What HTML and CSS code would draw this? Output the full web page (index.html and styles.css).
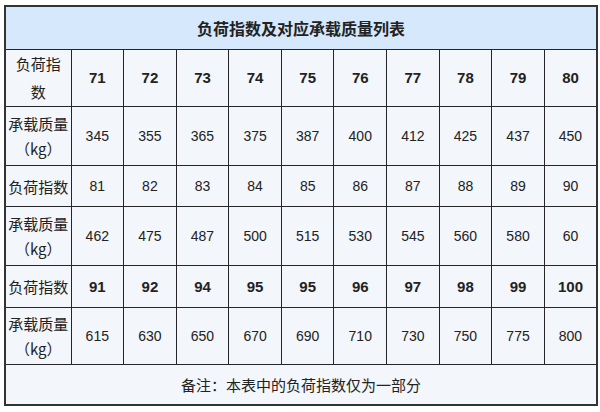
FILE: index.html
```html
<!DOCTYPE html>
<html lang="zh">
<head>
<meta charset="utf-8">
<title>负荷指数及对应承载质量列表</title>
<link rel="stylesheet" href="styles.css">
</head>
<body>
<table class="load-table">
  <colgroup>
    <col class="col-label">
    <col span="10" class="col-val">
  </colgroup>
  <thead>
    <tr class="row-title"><th colspan="11">负荷指数及对应承载质量列表</th></tr>
  </thead>
  <tbody>
    <tr class="row-a bold">
      <td class="label">负荷指<br>数</td>
      <td>71</td><td>72</td><td>73</td><td>74</td><td>75</td><td>76</td><td>77</td><td>78</td><td>79</td><td>80</td>
    </tr>
    <tr class="row-b">
      <td class="label">承载质量<br>（kg）</td>
      <td>345</td><td>355</td><td>365</td><td>375</td><td>387</td><td>400</td><td>412</td><td>425</td><td>437</td><td>450</td>
    </tr>
    <tr class="row-c">
      <td class="label">负荷指数</td>
      <td>81</td><td>82</td><td>83</td><td>84</td><td>85</td><td>86</td><td>87</td><td>88</td><td>89</td><td>90</td>
    </tr>
    <tr class="row-d">
      <td class="label">承载质量<br>（kg）</td>
      <td>462</td><td>475</td><td>487</td><td>500</td><td>515</td><td>530</td><td>545</td><td>560</td><td>580</td><td>60</td>
    </tr>
    <tr class="row-e bold">
      <td class="label">负荷指数</td>
      <td>91</td><td>92</td><td>94</td><td>95</td><td>95</td><td>96</td><td>97</td><td>98</td><td>99</td><td>100</td>
    </tr>
    <tr class="row-f">
      <td class="label">承载质量<br>（kg）</td>
      <td>615</td><td>630</td><td>650</td><td>670</td><td>690</td><td>710</td><td>730</td><td>750</td><td>775</td><td>800</td>
    </tr>
  </tbody>
  <tfoot>
    <tr class="row-note"><td colspan="11">备注：本表中的负荷指数仅为一部分</td></tr>
  </tfoot>
</table>
</body>
</html>
```

FILE: styles.css
```css
html, body {
  margin: 0;
  padding: 0;
  background: #ffffff;
}

body {
  padding: 5px 0 0 4px;
  font-family: "Liberation Sans", "Noto Sans CJK SC", sans-serif;
  color: #222222;
}

.load-table {
  border-collapse: collapse;
  table-layout: fixed;
  width: 592px;
  border: 2px solid #333333;
}

.col-label { width: 66px; }
.col-val { width: 52.6px; }

.load-table th,
.load-table td {
  border: 1px solid #262626;
  padding: 0;
  text-align: center;
  vertical-align: middle;
  background: #f3f6fa;
  font-size: 14px;
  line-height: 25px;
}

.row-title th {
  background: #d6e8fb;
  font-size: 16px;
  font-weight: bold;
  height: 42px;
  font-family: "Noto Sans CJK SC", sans-serif;
}

.label {
  font-family: "Noto Sans CJK SC", sans-serif;
  font-size: 15px !important;
  white-space: nowrap;
}

.bold td { font-weight: bold; font-size: 15px; }
.bold td.label { font-weight: normal; }

.row-a td { height: 56px; line-height: 28px; }
.row-b td { height: 58px; }
.row-c td { height: 40px; }
.row-d td { height: 58px; }
.row-e td { height: 41px; }
.row-f td { height: 56px; }

.row-note td {
  height: 39px;
  font-family: "Noto Sans CJK SC", sans-serif;
  font-size: 15px;
}
```
